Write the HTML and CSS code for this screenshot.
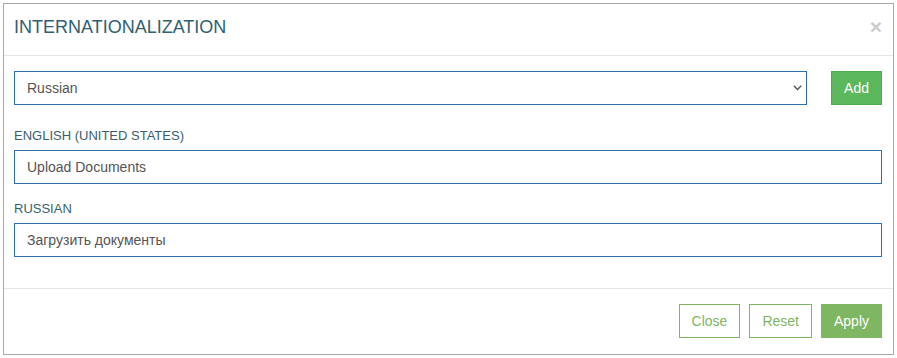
FILE: index.html
```html
<!DOCTYPE html>
<html lang="en">
<head>
<meta charset="utf-8">
<title>Internationalization</title>
<link rel="stylesheet" href="styles.css">
</head>
<body>
<div class="dialog">
  <div class="dialog-header">
    <h4 class="dialog-title">INTERNATIONALIZATION</h4>
    <button class="close" type="button" aria-label="Close">×</button>
  </div>
  <div class="dialog-body">
    <div class="lang-row">
      <div class="select-wrap">
        <select class="control select">
          <option>Russian</option>
        </select>
        <svg class="chevron" width="9" height="6" viewBox="0 0 9 6" aria-hidden="true"><path d="M0.8 0.8 L4.5 4.6 L8.2 0.8" fill="none" stroke="#555" stroke-width="1.4"/></svg>
      </div>
      <button class="btn btn-add" type="button">Add</button>
    </div>
    <div class="group first">
      <label class="label">ENGLISH (UNITED STATES)</label>
      <input class="control" type="text" value="Upload Documents">
    </div>
    <div class="group">
      <label class="label">RUSSIAN</label>
      <input class="control" type="text" value="Загрузить документы">
    </div>
  </div>
  <div class="dialog-footer">
    <button class="btn btn-outline" type="button">Close</button>
    <button class="btn btn-outline" type="button">Reset</button>
    <button class="btn btn-apply" type="button">Apply</button>
  </div>
</div>
</body>
</html>
```

FILE: styles.css
```css
* { box-sizing: border-box; }

body {
  margin: 0;
  background: #fff;
  font-family: "Liberation Sans", Arial, sans-serif;
  font-size: 14px;
  color: #555;
}

.dialog {
  margin: 3px;
  width: 891px;
  border: 1px solid #a9a9a9;
  background: #fff;
}

.dialog-header {
  display: flex;
  justify-content: space-between;
  align-items: flex-start;
  height: 52px;
  padding: 13px 10px 0 10px;
  border-bottom: 1px solid #e5e5e5;
}

.dialog-title {
  margin: 0;
  font-size: 18px;
  line-height: 20px;
  font-weight: normal;
  color: #31606e;
}

.close {
  margin: -1px 1px 0 0;
  padding: 0;
  border: 0;
  background: transparent;
  font-family: "Liberation Sans", Arial, sans-serif;
  font-size: 21px;
  font-weight: bold;
  line-height: 21px;
  color: #cccccc;
  cursor: pointer;
}

.dialog-body {
  padding: 15px 10px 31px 10px;
}

.lang-row {
  display: flex;
  gap: 24px;
  margin-right: 1px;
}

.select-wrap {
  position: relative;
  flex: 1;
}

.control {
  display: block;
  width: 100%;
  height: 34px;
  padding: 6px 12px;
  border: 1px solid #2f6fa6;
  border-radius: 0;
  background: #fff;
  font-family: "Liberation Sans", Arial, sans-serif;
  font-size: 14px;
  color: #555;
  outline: none;
}

.select {
  appearance: none;
  -webkit-appearance: none;
  padding-left: 12px;
}

.chevron {
  position: absolute;
  right: 5px;
  top: 14px;
  pointer-events: none;
}

.group.first { margin-top: 22px; }
.group { margin-top: 16px; margin-right: 1px; }

.label {
  display: block;
  height: 18px;
  line-height: 18px;
  margin-bottom: 5px;
  font-size: 13px;
  color: #3a5f6b;
}

.btn {
  height: 34px;
  padding: 6px 12px;
  border: 1px solid transparent;
  border-radius: 0;
  font-family: "Liberation Sans", Arial, sans-serif;
  font-size: 14px;
  line-height: 20px;
  cursor: pointer;
}

.btn-add {
  background: #5cb85c;
  border-color: #4cae4c;
  color: #fff;
}

.dialog-footer {
  display: flex;
  justify-content: flex-end;
  gap: 9px;
  padding: 15px 11px 16px 10px;
  border-top: 1px solid #e5e5e5;
}

.btn-outline {
  background: #fff;
  border-color: #7fb662;
  color: #7fb662;
}

.btn-apply {
  background: #7fb662;
  border-color: #7fb662;
  color: #fff;
}
```
